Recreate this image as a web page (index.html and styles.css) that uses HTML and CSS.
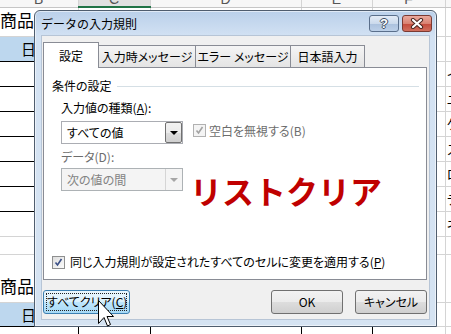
FILE: index.html
```html
<!DOCTYPE html>
<html lang="ja">
<head>
    <meta charset="UTF-8">
    <title>データの入力規則</title>
    <link rel="stylesheet" href="styles.css">
</head>
<body>
    <!-- 背景のワークシート -->
    <table class="sheet">
        <colgroup>
            <col class="cb"><col class="cc"><col class="cd"><col class="ce"><col class="cf"><col class="cg">
        </colgroup>
        <tr class="hd">
            <th><div class="col"><span>B</span></div></th>
            <th class="sel"><div class="col"><span>C</span></div></th>
            <th><div class="col"><span>D</span></div></th>
            <th><div class="col"><span>E</span></div></th>
            <th><div class="col"><span>F</span></div></th>
            <th><div class="col"><span>G</span></div></th>
        </tr>
        <tr class="r29"><td class="big">商品</td><td></td><td></td><td></td><td></td><td></td></tr>
        <tr class="r25"><td class="k blue day">日付</td><td class="k blue"></td><td class="k blue"></td><td class="k blue"></td><td></td><td></td></tr>
        <tr class="r25"><td class="k"></td><td class="k"></td><td class="k"></td><td class="k"></td><td></td><td class="note">イ</td></tr>
        <tr class="r25"><td class="k"></td><td class="k"></td><td class="k"></td><td class="k"></td><td></td><td class="note">ユ</td></tr>
        <tr class="r25"><td class="k"></td><td class="k"></td><td class="k"></td><td class="k"></td><td></td><td class="note">ケ</td></tr>
        <tr class="r25"><td class="k"></td><td class="k"></td><td class="k"></td><td class="k"></td><td></td><td class="note">ス</td></tr>
        <tr class="r25"><td class="k"></td><td class="k"></td><td class="k"></td><td class="k"></td><td></td><td class="note">ロ</td></tr>
        <tr class="r25"><td class="k"></td><td class="k"></td><td class="k"></td><td class="k"></td><td></td><td class="note">テ</td></tr>
        <tr class="r25"><td></td><td></td><td></td><td></td><td></td><td class="note">ネ</td></tr>
        <tr class="r18"><td></td><td></td><td></td><td></td><td></td><td></td></tr>
        <tr class="r48"><td class="big">商品</td><td></td><td></td><td></td><td></td><td></td></tr>
        <tr class="r24"><td class="k blue day">日付</td><td class="k blue"></td><td class="k blue"></td><td class="k blue"></td><td></td><td></td></tr>
        <tr class="r25"><td class="k"></td><td class="k"></td><td class="k"></td><td class="k"></td><td></td><td></td></tr>
    </table>

    <!-- データの入力規則ダイアログ -->
    <div class="dialog">
        <div class="titlebar">
            <span class="title">データの入力規則</span>
            <button class="cap help"><span>?</span></button>
            <button class="cap close">
                <svg width="14" height="11" viewBox="0 0 14 11">
                    <path d="M3 2L11 9M11 2L3 9" stroke="#4a2621" stroke-width="4.2" stroke-linecap="round"/>
                    <path d="M3 2L11 9M11 2L3 9" stroke="#fff" stroke-width="2.2" stroke-linecap="round"/>
                </svg>
            </button>
        </div>

        <div class="client">
            <div class="tabs">
                <div class="tab active t1">設定</div>
                <div class="tab t2">入力時メッセージ</div>
                <div class="tab t3">エラー メッセージ</div>
                <div class="tab t4">日本語入力</div>
            </div>

            <div class="panel">
                <div class="legend">条件の設定</div>
                <div class="group">
                    <div class="label">入力値の種類(<u>A</u>):</div>
                    <div class="row">
                        <div class="combo">
                            <span class="value">すべての値</span>
                            <span class="drop"><i class="arrow"></i></span>
                        </div>
                        <div class="check off">
                            <span class="box">
                                <svg width="11" height="11" viewBox="0 0 11 11"><path d="M2.5 5.5L4.5 8L8.5 2" fill="none" stroke="#a2a2a2" stroke-width="1.6"/></svg>
                            </span>
                            <span class="text">空白を無視する(B)</span>
                        </div>
                    </div>
                    <div class="label off">データ(D):</div>
                    <div class="row top">
                        <div class="combo disabled">
                            <span class="value">次の値の間</span>
                            <span class="drop"><i class="arrow"></i></span>
                        </div>
                        <div class="stamp">リストクリア</div>
                    </div>
                </div>
                <div class="check apply">
                    <span class="box">
                        <svg width="11" height="11" viewBox="0 0 11 11"><path d="M2.5 5.5L4.5 8L8.5 2" fill="none" stroke="#3a4f86" stroke-width="1.6"/></svg>
                    </span>
                    <span class="text">同じ入力規則が設定されたすべてのセルに変更を適用する(<u>P</u>)</span>
                </div>
            </div>

            <div class="buttons">
                <button class="btn clear"><span>すべてクリア(<u>C</u>)</span></button>
                <button class="btn"><span>OK</span></button>
                <button class="btn"><span>キャンセル</span></button>
            </div>
        </div>
    </div>

    <!-- マウスカーソル -->
    <svg class="cursor" width="18" height="29" viewBox="0 0 18 29">
        <path d="M1.5 1.5V24.5L7 18.5L10.5 27L13.5 25.5L10 17.5H16.5Z" fill="#fff" stroke="#000" stroke-width="1" stroke-linejoin="round"/>
    </svg>
</body>
</html>
```

FILE: styles.css
```css
/* 全体 */
html, body {
    margin: 0;
    padding: 0;
}

body {
    position: relative;
    width: 451px;
    height: 334px;
    overflow: hidden;
    background: #fff;
    font-family: "Noto Sans CJK JP", sans-serif;
    font-size: 12px;
    color: #000;
}

/* ワークシート */
.sheet {
    border-collapse: collapse;
    table-layout: fixed;
    width: 485px;
}

.cb { width: 78px; }
.cc { width: 72px; }
.cd { width: 151px; }
.ce { width: 71px; }
.cf { width: 73px; }
.cg { width: 40px; }

.sheet th {
    padding: 0;
    border: 0;
    border-right: 1px solid #d4d4d4;
    border-bottom: 1px solid #c6c6c6;
    background: #f7f7f7;
    font-weight: normal;
    vertical-align: top;
}

.sheet th.sel {
    background: #e1e1e1;
    border-bottom: 2px solid #217346;
}

.col {
    height: 6px;
    overflow: hidden;
    font: 14px/14px "Liberation Sans", sans-serif;
    color: #555;
    text-align: center;
}

.col span {
    display: block;
    margin-top: -8px;
}

.sheet td {
    padding: 0;
    border: 1px solid #d4d4d4;
    white-space: nowrap;
}

.sheet td:first-child {
    border-left: 0;
}

.r18 { height: 18px; }
.r24 { height: 24px; }
.r25 { height: 25px; }
.r29 { height: 29px; }
.r48 { height: 48px; }

.sheet td.k {
    border-color: #000;
}

.sheet td.blue {
    background: #bdd7ee;
}

.big {
    font-size: 17px;
    line-height: 20px;
    vertical-align: bottom;
    padding-bottom: 6px !important;
}

.day {
    font-size: 15px;
    padding-left: 21px !important;
}

.note {
    font-size: 13px;
    padding-left: 1px !important;
    vertical-align: middle;
}

/* ダイアログ */
.dialog {
    position: absolute;
    left: 34px;
    top: 10px;
    width: 403px;
    height: 317px;
    box-sizing: border-box;
    border: 1px solid #4f5d6e;
    border-radius: 6px 6px 0 0;
    background: linear-gradient(#bad0ea, #d3e2f3 26px, #d5e3f2);
    box-shadow: inset 0 0 0 1px rgba(255, 255, 255, 0.55);
    display: flex;
    flex-direction: column;
}

.titlebar {
    height: 24px;
    display: flex;
    align-items: center;
    padding: 0 4px 0 6px;
}

.title {
    flex: 1;
    font-size: 12px;
}

.cap {
    width: 30px;
    height: 17px;
    box-sizing: border-box;
    margin-left: 3px;
    padding: 0;
    border: 1px solid #5a6f8b;
    border-radius: 3px;
    display: flex;
    align-items: center;
    justify-content: center;
}

.help {
    background: linear-gradient(#e3ebf6, #cbdaec 50%, #abc1dd 51%, #bcd0e8);
}

.help span {
    font: bold 13px/13px "Liberation Sans", sans-serif;
    color: #fff;
    text-shadow: 1px 0 #3d4c60, -1px 0 #3d4c60, 0 1px #3d4c60, 0 -1px #3d4c60;
}

.close {
    border-color: #7b3a32;
    background: linear-gradient(#eaa99d, #d98272 50%, #c4493a 51%, #d06f5e);
}

.client {
    flex: 1;
    margin: 0 6px 6px;
    background: #f0f0f0;
    border: 1px solid #b7c5d6;
    padding: 6px 2px 5px 1px;
    display: flex;
    flex-direction: column;
    min-height: 0;
}

/* タブ */
.tabs {
    display: flex;
    align-items: flex-end;
    height: 25px;
    font-feature-settings: "palt";
}

.tab {
    height: 22px;
    box-sizing: border-box;
    margin-left: -1px;
    border: 1px solid #898c95;
    border-bottom: 0;
    background: linear-gradient(#f5f5f5, #e4e4e4);
    display: flex;
    align-items: center;
    justify-content: center;
}

.tab.active {
    position: relative;
    z-index: 1;
    height: 26px;
    margin-left: 0;
    margin-bottom: -1px;
    background: #fff;
}

.t1 { width: 56px; }
.t2 { width: 98px; }
.t3 { width: 96px; }
.t4 { width: 75px; }

.panel {
    flex: 1;
    background: #fff;
    border: 1px solid #898c95;
    padding: 11px 7px 10px 8px;
    display: flex;
    flex-direction: column;
    font-feature-settings: "palt";
}

.legend {
    display: flex;
    align-items: center;
    line-height: 14px;
}

.legend::after {
    content: "";
    flex: 1;
    height: 1px;
    margin-left: 5px;
    background: #d5dfe5;
}

.group {
    padding-left: 9px;
}

.label {
    line-height: 14px;
    margin-top: 8px;
}

.label.off {
    margin-top: 6px;
    color: #6d6d6d;
}

.row {
    display: flex;
    align-items: center;
    margin-top: 6px;
}

.row.top {
    align-items: flex-start;
    margin-top: 4px;
}

/* コンボボックス */
.combo {
    width: 122px;
    height: 23px;
    box-sizing: border-box;
    border: 1px solid #abadb3;
    background: #fff;
    display: flex;
    align-items: center;
    padding-left: 5px;
}

.combo .value {
    flex: 1;
    line-height: 14px;
}

.combo .drop {
    width: 17px;
    height: 21px;
    box-sizing: border-box;
    border: 1px solid #707070;
    border-radius: 2px;
    background: linear-gradient(#f2f2f2, #ebebeb 50%, #dddddd 51%, #cfcfcf);
    display: flex;
    align-items: center;
    justify-content: center;
}

.arrow {
    width: 0;
    height: 0;
    border-left: 4px solid transparent;
    border-right: 4px solid transparent;
    border-top: 4px solid #000;
}

.combo.disabled {
    border-color: #adb2b5;
    background: #f4f4f4;
    color: #838383;
}

.combo.disabled .drop {
    border: 0;
    border-left: 1px solid #d5d5d5;
    border-radius: 0;
    background: none;
}

.combo.disabled .arrow {
    border-top-color: #a6a6a6;
}

/* チェックボックス */
.check {
    display: flex;
    align-items: center;
    line-height: 14px;
    white-space: nowrap;
}

.check .box {
    width: 13px;
    height: 13px;
    box-sizing: border-box;
    border: 1px solid #8e8f8f;
    background: linear-gradient(135deg, #dedede, #fbfbfb);
    display: flex;
    align-items: center;
    justify-content: center;
}

.check.off {
    margin-left: 10px;
    margin-top: -4px;
    color: #6d6d6d;
    gap: 3px;
}

.check.off .box {
    border-color: #b1b1b1;
    background: #f4f4f4;
}

.check.apply {
    margin-top: auto;
    gap: 5px;
}

.stamp {
    margin: 6px 0 0 7px;
    font-size: 32px;
    line-height: 32px;
    font-weight: bold;
    color: #c00000;
    font-feature-settings: normal;
}

/* ボタン */
.buttons {
    display: flex;
    gap: 12px;
    margin-top: 10px;
    font-feature-settings: "palt";
}

.btn {
    width: 72px;
    height: 24px;
    padding: 2px;
    border: 1px solid #707070;
    border-radius: 3px;
    background: linear-gradient(#f2f2f2, #ebebeb 50%, #dddddd 51%, #cfcfcf);
    font: inherit;
    color: #000;
}

.btn span {
    display: block;
    height: 18px;
    box-sizing: border-box;
    border: 1px solid transparent;
    line-height: 16px;
    text-align: center;
    white-space: nowrap;
}

.btn.clear {
    width: 87px;
    margin-right: auto;
    border-color: #3c7fb1;
    background: linear-gradient(#eaf6fd, #d9f0fc 50%, #bee6fd 51%, #a7d9f5);
}

.btn.clear span {
    border: 1px dotted #222;
}

.cursor {
    position: absolute;
    left: 97px;
    top: 299px;
}
```
